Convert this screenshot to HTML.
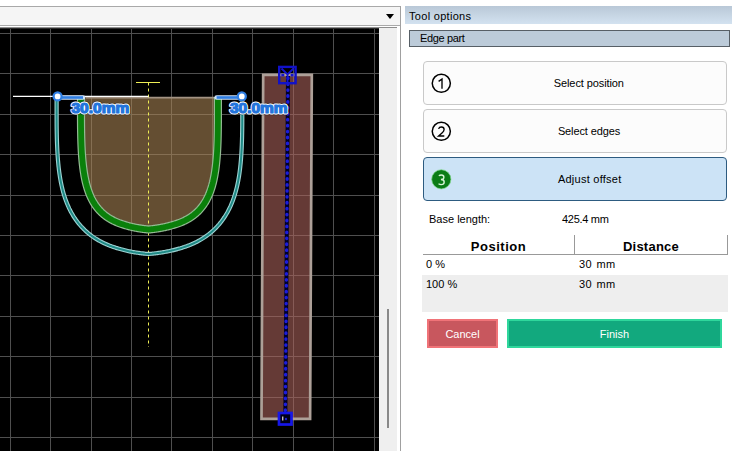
<!DOCTYPE html>
<html><head><meta charset="utf-8">
<style>
*{margin:0;padding:0;box-sizing:border-box}
html,body{width:732px;height:451px;overflow:hidden;background:#fff;font-family:"Liberation Sans",sans-serif;color:#000}
.abs{position:absolute}
#combo{left:-1px;top:6px;width:402px;height:20px;background:#f5f5f5;border:1px solid #a9a9a9}
#arrow{left:385.5px;top:14px;width:0;height:0;border-left:4.5px solid transparent;border-right:4.5px solid transparent;border-top:5px solid #000}
#vline{left:400px;top:6px;width:1px;height:445px;background:#a0a0a0}
#frametop{left:0;top:27px;width:397px;height:2px;background:linear-gradient(#8e8e8e 50%,#2c2c2c 50%)}
#sb{left:379px;top:28px;width:18px;height:423px;background:#efefef}
#thumb{left:387px;top:309px;width:2px;height:119px;background:#888}
#title{left:405px;top:6px;width:327px;height:18px;background:linear-gradient(#b9c8d7,#d3e2f0)}
.t{position:absolute;white-space:nowrap;font-size:11px;line-height:13px}
#edgebox{left:409px;top:30px;width:321px;height:17px;background:#bccbd9;border:1px solid #575f66}
.btn{position:absolute;left:423px;width:304px;height:44px;border:1px solid #c9c9c9;border-radius:4px;background:#fcfcfc}
.btn.sel{background:#cce3f6;border-color:#2d5b80}
.circ{position:absolute;left:8px;top:11px;width:20px;height:20px;border:1.6px solid #000;border-radius:50%;font-size:12px;line-height:17px;text-align:center}
.circ.g{background:#0d7a17;border-color:#0d7a17;color:#fff}
.bt{position:absolute;top:0;left:29px;right:0;height:42px;line-height:42px;text-align:center;font-size:11px}
#hdr1,#hdr2{position:absolute;top:235px;height:20px;padding-top:1px;border-bottom:1px solid #999;border-right:1px solid #999;font-weight:bold;font-size:13px;line-height:22px;text-align:center}
#hdr1{left:423px;width:152px}
#hdr2{left:575px;width:153px}
#row2{left:422px;top:275px;width:306px;height:37px;background:#eeeeee}
#cancel{left:427px;top:319px;width:71px;height:28.5px;background:#c8575e;border:2px solid #f07378;color:#fff;font-size:11px;line-height:26px;text-align:center}
#finish{left:507px;top:319px;width:215px;height:28.5px;background:#12a97e;border:2px solid #2fd79c;color:#fff;font-size:11px;line-height:26px;text-align:center}
svg{position:absolute;left:0;top:0}
</style></head><body>
<div id="combo" class="abs"></div>
<div id="arrow" class="abs"></div>
<div id="frametop" class="abs"></div>
<svg width="379" height="451" viewBox="0 0 379 451" style="clip-path:inset(29px 0 0 0)">
<defs><clipPath id="cv"><rect x="0" y="28" width="379" height="423"/></clipPath></defs>
<g clip-path="url(#cv)">
<rect x="0" y="28" width="379" height="423" fill="#000"/>
<g stroke="#4f4f4f" stroke-width="1" shape-rendering="crispEdges">
<line x1="10.5" y1="28" x2="10.5" y2="451"/>
<line x1="50.5" y1="28" x2="50.5" y2="451"/>
<line x1="91.5" y1="28" x2="91.5" y2="451"/>
<line x1="131.5" y1="28" x2="131.5" y2="451"/>
<line x1="171.5" y1="28" x2="171.5" y2="451"/>
<line x1="212.5" y1="28" x2="212.5" y2="451"/>
<line x1="252.5" y1="28" x2="252.5" y2="451"/>
<line x1="293.5" y1="28" x2="293.5" y2="451"/>
<line x1="333.5" y1="28" x2="333.5" y2="451"/>
<line x1="374.5" y1="28" x2="374.5" y2="451"/>
<line x1="0" y1="33.5" x2="379" y2="33.5"/>
<line x1="0" y1="73.5" x2="379" y2="73.5"/>
<line x1="0" y1="114.5" x2="379" y2="114.5"/>
<line x1="0" y1="154.5" x2="379" y2="154.5"/>
<line x1="0" y1="195.5" x2="379" y2="195.5"/>
<line x1="0" y1="235.5" x2="379" y2="235.5"/>
<line x1="0" y1="275.5" x2="379" y2="275.5"/>
<line x1="0" y1="316.5" x2="379" y2="316.5"/>
<line x1="0" y1="356.5" x2="379" y2="356.5"/>
<line x1="0" y1="397.5" x2="379" y2="397.5"/>
<line x1="0" y1="437.5" x2="379" y2="437.5"/>
</g>
<!-- U shape fill -->
<path d="M81.00,97.00 L81.00,115.10 L81.00,116.22 L81.00,117.33 L81.00,118.44 L81.01,119.54 L81.01,120.63 L81.02,121.72 L81.02,122.80 L81.03,123.88 L81.04,124.95 L81.05,126.01 L81.06,127.07 L81.07,128.12 L81.08,129.17 L81.10,130.21 L81.11,131.25 L81.13,132.28 L81.15,133.30 L81.17,134.32 L81.19,135.33 L81.21,136.34 L81.23,137.34 L81.26,138.33 L81.29,139.32 L81.32,140.30 L81.35,141.28 L81.38,142.25 L81.42,143.22 L81.45,144.18 L81.49,145.13 L81.53,146.08 L81.57,147.02 L81.62,147.96 L81.67,148.89 L81.71,149.81 L81.76,150.73 L81.82,151.65 L81.87,152.56 L81.93,153.46 L81.99,154.35 L82.05,155.25 L82.12,156.13 L82.18,157.01 L82.25,157.88 L82.32,158.75 L82.40,159.62 L82.47,160.47 L82.55,161.32 L82.64,162.17 L82.72,163.01 L82.81,163.84 L82.90,164.67 L82.99,165.50 L83.09,166.31 L83.19,167.13 L83.29,167.93 L83.39,168.73 L83.50,169.53 L83.61,170.32 L83.72,171.10 L83.84,171.88 L83.96,172.65 L84.08,173.42 L84.21,174.18 L84.34,174.94 L84.47,175.69 L84.61,176.44 L84.75,177.18 L84.89,177.91 L85.04,178.64 L85.19,179.36 L85.34,180.08 L85.50,180.79 L85.66,181.50 L85.83,182.20 L85.99,182.90 L86.17,183.59 L86.34,184.27 L86.52,184.95 L86.71,185.63 L86.89,186.29 L87.08,186.96 L87.28,187.62 L87.48,188.27 L87.68,188.91 L87.89,189.56 L88.10,190.19 L88.32,190.82 L88.54,191.45 L88.76,192.07 L88.99,192.68 L89.22,193.29 L89.46,193.90 L89.70,194.49 L89.95,195.09 L90.20,195.67 L90.46,196.26 L90.72,196.83 L90.98,197.41 L91.25,197.97 L91.53,198.53 L91.80,199.09 L92.09,199.64 L92.38,200.19 L92.67,200.73 L92.97,201.26 L93.27,201.79 L93.58,202.31 L93.89,202.83 L94.21,203.35 L94.53,203.85 L94.86,204.36 L95.19,204.85 L95.53,205.35 L95.88,205.83 L96.23,206.32 L96.58,206.79 L96.94,207.27 L97.31,207.73 L97.68,208.19 L98.05,208.65 L98.43,209.10 L98.82,209.55 L99.22,209.99 L99.61,210.42 L100.02,210.85 L100.43,211.28 L100.84,211.70 L101.27,212.11 L101.69,212.52 L102.13,212.93 L102.57,213.33 L103.01,213.72 L103.46,214.11 L103.92,214.49 L104.38,214.87 L104.85,215.25 L105.33,215.62 L105.81,215.98 L106.30,216.34 L106.79,216.69 L107.29,217.04 L107.80,217.39 L108.31,217.72 L108.83,218.06 L109.36,218.39 L109.89,218.71 L110.43,219.03 L110.98,219.34 L111.53,219.65 L112.09,219.95 L112.66,220.25 L113.23,220.55 L113.81,220.83 L114.40,221.12 L114.99,221.40 L115.59,221.67 L116.20,221.94 L116.81,222.20 L117.43,222.46 L118.06,222.71 L118.70,222.96 L119.34,223.21 L119.99,223.45 L120.64,223.68 L121.31,223.91 L121.98,224.13 L122.66,224.35 L123.35,224.57 L124.04,224.78 L124.74,224.99 L125.45,225.21 L126.17,225.43 L126.89,225.64 L127.62,225.84 L128.36,226.05 L129.11,226.24 L129.86,226.44 L130.62,226.62 L131.39,226.81 L132.17,226.99 L132.96,227.16 L133.75,227.33 L134.55,227.50 L135.36,227.66 L136.18,227.81 L137.01,227.97 L137.84,228.11 L138.68,228.26 L139.53,228.39 L140.39,228.53 L141.26,228.66 L142.14,228.78 L143.02,228.90 L143.91,229.02 L144.81,229.13 L145.72,229.24 L146.64,229.34 L147.57,229.44 L148.50,229.53 L149.46,229.44 L150.42,229.34 L151.36,229.23 L152.30,229.13 L153.23,229.01 L154.15,228.90 L155.06,228.78 L155.96,228.65 L156.85,228.52 L157.74,228.39 L158.61,228.25 L159.48,228.10 L160.34,227.96 L161.19,227.80 L162.03,227.65 L162.87,227.49 L163.70,227.32 L164.51,227.15 L165.32,226.97 L166.12,226.79 L166.92,226.61 L167.70,226.42 L168.48,226.23 L169.25,226.03 L170.01,225.83 L170.76,225.62 L171.51,225.41 L172.25,225.19 L172.97,224.98 L173.70,224.78 L174.41,224.57 L175.12,224.35 L175.82,224.13 L176.51,223.91 L177.19,223.68 L177.87,223.45 L178.54,223.21 L179.20,222.96 L179.85,222.71 L180.50,222.46 L181.14,222.20 L181.77,221.94 L182.40,221.67 L183.01,221.40 L183.62,221.12 L184.23,220.83 L184.82,220.55 L185.41,220.25 L186.00,219.95 L186.57,219.65 L187.14,219.34 L187.70,219.03 L188.26,218.71 L188.80,218.39 L189.35,218.06 L189.88,217.72 L190.41,217.39 L190.93,217.04 L191.45,216.69 L191.95,216.34 L192.46,215.98 L192.95,215.62 L193.44,215.25 L193.92,214.87 L194.40,214.49 L194.87,214.11 L195.33,213.72 L195.79,213.33 L196.24,212.93 L196.69,212.52 L197.13,212.11 L197.56,211.70 L197.99,211.28 L198.41,210.85 L198.83,210.42 L199.24,209.99 L199.64,209.55 L200.04,209.10 L200.43,208.65 L200.82,208.19 L201.20,207.73 L201.57,207.27 L201.94,206.79 L202.31,206.32 L202.67,205.83 L203.02,205.35 L203.37,204.85 L203.71,204.36 L204.05,203.85 L204.38,203.35 L204.71,202.83 L205.03,202.31 L205.34,201.79 L205.65,201.26 L205.96,200.73 L206.26,200.19 L206.56,199.64 L206.85,199.09 L207.13,198.53 L207.41,197.97 L207.69,197.41 L207.96,196.83 L208.23,196.26 L208.49,195.67 L208.75,195.09 L209.00,194.49 L209.25,193.90 L209.49,193.29 L209.73,192.68 L209.97,192.07 L210.20,191.45 L210.42,190.82 L210.64,190.19 L210.86,189.56 L211.07,188.91 L211.28,188.27 L211.49,187.62 L211.69,186.96 L211.88,186.29 L212.08,185.63 L212.26,184.95 L212.45,184.27 L212.63,183.59 L212.80,182.90 L212.98,182.20 L213.14,181.50 L213.31,180.79 L213.47,180.08 L213.63,179.36 L213.78,178.64 L213.93,177.91 L214.08,177.18 L214.22,176.44 L214.36,175.69 L214.50,174.94 L214.63,174.18 L214.76,173.42 L214.88,172.65 L215.01,171.88 L215.13,171.10 L215.24,170.32 L215.36,169.53 L215.47,168.73 L215.57,167.93 L215.68,167.13 L215.78,166.31 L215.87,165.50 L215.97,164.67 L216.06,163.84 L216.15,163.01 L216.24,162.17 L216.32,161.32 L216.40,160.47 L216.48,159.62 L216.56,158.75 L216.63,157.88 L216.70,157.01 L216.77,156.13 L216.83,155.25 L216.90,154.35 L216.96,153.46 L217.01,152.56 L217.07,151.65 L217.12,150.73 L217.18,149.81 L217.23,148.89 L217.27,147.96 L217.32,147.02 L217.36,146.08 L217.40,145.13 L217.44,144.18 L217.48,143.22 L217.51,142.25 L217.55,141.28 L217.58,140.30 L217.61,139.32 L217.64,138.33 L217.66,137.34 L217.69,136.34 L217.71,135.33 L217.73,134.32 L217.75,133.30 L217.77,132.28 L217.79,131.25 L217.80,130.21 L217.82,129.17 L217.83,128.12 L217.84,127.07 L217.85,126.01 L217.86,124.95 L217.87,123.88 L217.88,122.80 L217.88,121.72 L217.89,120.63 L217.89,119.54 L217.90,118.44 L217.90,117.33 L217.90,116.22 L217.90,115.10 L217.90,97.00 Z" fill="#ac8656" fill-opacity="0.58"/>
<!-- rectangle -->
<polygon points="263.2,74.8 311.8,74.8 310.1,418.8 261.5,418.8" fill="#ae645d" fill-opacity="0.58" stroke="#ada098" stroke-width="2.7"/>

<line x1="86" y1="97.6" x2="214" y2="97.6" stroke="#a39383" stroke-width="1.6"/>
<line x1="136" y1="82.5" x2="160" y2="82.5" stroke="#eeee55" stroke-width="1"/>
<line x1="148.5" y1="82.5" x2="148.5" y2="347" stroke="#eeee55" stroke-width="1" stroke-dasharray="3,3"/>
<path d="M81.00,97.00 L81.00,115.10 L81.00,116.22 L81.00,117.33 L81.00,118.44 L81.01,119.54 L81.01,120.63 L81.02,121.72 L81.02,122.80 L81.03,123.88 L81.04,124.95 L81.05,126.01 L81.06,127.07 L81.07,128.12 L81.08,129.17 L81.10,130.21 L81.11,131.25 L81.13,132.28 L81.15,133.30 L81.17,134.32 L81.19,135.33 L81.21,136.34 L81.23,137.34 L81.26,138.33 L81.29,139.32 L81.32,140.30 L81.35,141.28 L81.38,142.25 L81.42,143.22 L81.45,144.18 L81.49,145.13 L81.53,146.08 L81.57,147.02 L81.62,147.96 L81.67,148.89 L81.71,149.81 L81.76,150.73 L81.82,151.65 L81.87,152.56 L81.93,153.46 L81.99,154.35 L82.05,155.25 L82.12,156.13 L82.18,157.01 L82.25,157.88 L82.32,158.75 L82.40,159.62 L82.47,160.47 L82.55,161.32 L82.64,162.17 L82.72,163.01 L82.81,163.84 L82.90,164.67 L82.99,165.50 L83.09,166.31 L83.19,167.13 L83.29,167.93 L83.39,168.73 L83.50,169.53 L83.61,170.32 L83.72,171.10 L83.84,171.88 L83.96,172.65 L84.08,173.42 L84.21,174.18 L84.34,174.94 L84.47,175.69 L84.61,176.44 L84.75,177.18 L84.89,177.91 L85.04,178.64 L85.19,179.36 L85.34,180.08 L85.50,180.79 L85.66,181.50 L85.83,182.20 L85.99,182.90 L86.17,183.59 L86.34,184.27 L86.52,184.95 L86.71,185.63 L86.89,186.29 L87.08,186.96 L87.28,187.62 L87.48,188.27 L87.68,188.91 L87.89,189.56 L88.10,190.19 L88.32,190.82 L88.54,191.45 L88.76,192.07 L88.99,192.68 L89.22,193.29 L89.46,193.90 L89.70,194.49 L89.95,195.09 L90.20,195.67 L90.46,196.26 L90.72,196.83 L90.98,197.41 L91.25,197.97 L91.53,198.53 L91.80,199.09 L92.09,199.64 L92.38,200.19 L92.67,200.73 L92.97,201.26 L93.27,201.79 L93.58,202.31 L93.89,202.83 L94.21,203.35 L94.53,203.85 L94.86,204.36 L95.19,204.85 L95.53,205.35 L95.88,205.83 L96.23,206.32 L96.58,206.79 L96.94,207.27 L97.31,207.73 L97.68,208.19 L98.05,208.65 L98.43,209.10 L98.82,209.55 L99.22,209.99 L99.61,210.42 L100.02,210.85 L100.43,211.28 L100.84,211.70 L101.27,212.11 L101.69,212.52 L102.13,212.93 L102.57,213.33 L103.01,213.72 L103.46,214.11 L103.92,214.49 L104.38,214.87 L104.85,215.25 L105.33,215.62 L105.81,215.98 L106.30,216.34 L106.79,216.69 L107.29,217.04 L107.80,217.39 L108.31,217.72 L108.83,218.06 L109.36,218.39 L109.89,218.71 L110.43,219.03 L110.98,219.34 L111.53,219.65 L112.09,219.95 L112.66,220.25 L113.23,220.55 L113.81,220.83 L114.40,221.12 L114.99,221.40 L115.59,221.67 L116.20,221.94 L116.81,222.20 L117.43,222.46 L118.06,222.71 L118.70,222.96 L119.34,223.21 L119.99,223.45 L120.64,223.68 L121.31,223.91 L121.98,224.13 L122.66,224.35 L123.35,224.57 L124.04,224.78 L124.74,224.99 L125.45,225.21 L126.17,225.43 L126.89,225.64 L127.62,225.84 L128.36,226.05 L129.11,226.24 L129.86,226.44 L130.62,226.62 L131.39,226.81 L132.17,226.99 L132.96,227.16 L133.75,227.33 L134.55,227.50 L135.36,227.66 L136.18,227.81 L137.01,227.97 L137.84,228.11 L138.68,228.26 L139.53,228.39 L140.39,228.53 L141.26,228.66 L142.14,228.78 L143.02,228.90 L143.91,229.02 L144.81,229.13 L145.72,229.24 L146.64,229.34 L147.57,229.44 L148.50,229.53 L149.46,229.44 L150.42,229.34 L151.36,229.23 L152.30,229.13 L153.23,229.01 L154.15,228.90 L155.06,228.78 L155.96,228.65 L156.85,228.52 L157.74,228.39 L158.61,228.25 L159.48,228.10 L160.34,227.96 L161.19,227.80 L162.03,227.65 L162.87,227.49 L163.70,227.32 L164.51,227.15 L165.32,226.97 L166.12,226.79 L166.92,226.61 L167.70,226.42 L168.48,226.23 L169.25,226.03 L170.01,225.83 L170.76,225.62 L171.51,225.41 L172.25,225.19 L172.97,224.98 L173.70,224.78 L174.41,224.57 L175.12,224.35 L175.82,224.13 L176.51,223.91 L177.19,223.68 L177.87,223.45 L178.54,223.21 L179.20,222.96 L179.85,222.71 L180.50,222.46 L181.14,222.20 L181.77,221.94 L182.40,221.67 L183.01,221.40 L183.62,221.12 L184.23,220.83 L184.82,220.55 L185.41,220.25 L186.00,219.95 L186.57,219.65 L187.14,219.34 L187.70,219.03 L188.26,218.71 L188.80,218.39 L189.35,218.06 L189.88,217.72 L190.41,217.39 L190.93,217.04 L191.45,216.69 L191.95,216.34 L192.46,215.98 L192.95,215.62 L193.44,215.25 L193.92,214.87 L194.40,214.49 L194.87,214.11 L195.33,213.72 L195.79,213.33 L196.24,212.93 L196.69,212.52 L197.13,212.11 L197.56,211.70 L197.99,211.28 L198.41,210.85 L198.83,210.42 L199.24,209.99 L199.64,209.55 L200.04,209.10 L200.43,208.65 L200.82,208.19 L201.20,207.73 L201.57,207.27 L201.94,206.79 L202.31,206.32 L202.67,205.83 L203.02,205.35 L203.37,204.85 L203.71,204.36 L204.05,203.85 L204.38,203.35 L204.71,202.83 L205.03,202.31 L205.34,201.79 L205.65,201.26 L205.96,200.73 L206.26,200.19 L206.56,199.64 L206.85,199.09 L207.13,198.53 L207.41,197.97 L207.69,197.41 L207.96,196.83 L208.23,196.26 L208.49,195.67 L208.75,195.09 L209.00,194.49 L209.25,193.90 L209.49,193.29 L209.73,192.68 L209.97,192.07 L210.20,191.45 L210.42,190.82 L210.64,190.19 L210.86,189.56 L211.07,188.91 L211.28,188.27 L211.49,187.62 L211.69,186.96 L211.88,186.29 L212.08,185.63 L212.26,184.95 L212.45,184.27 L212.63,183.59 L212.80,182.90 L212.98,182.20 L213.14,181.50 L213.31,180.79 L213.47,180.08 L213.63,179.36 L213.78,178.64 L213.93,177.91 L214.08,177.18 L214.22,176.44 L214.36,175.69 L214.50,174.94 L214.63,174.18 L214.76,173.42 L214.88,172.65 L215.01,171.88 L215.13,171.10 L215.24,170.32 L215.36,169.53 L215.47,168.73 L215.57,167.93 L215.68,167.13 L215.78,166.31 L215.87,165.50 L215.97,164.67 L216.06,163.84 L216.15,163.01 L216.24,162.17 L216.32,161.32 L216.40,160.47 L216.48,159.62 L216.56,158.75 L216.63,157.88 L216.70,157.01 L216.77,156.13 L216.83,155.25 L216.90,154.35 L216.96,153.46 L217.01,152.56 L217.07,151.65 L217.12,150.73 L217.18,149.81 L217.23,148.89 L217.27,147.96 L217.32,147.02 L217.36,146.08 L217.40,145.13 L217.44,144.18 L217.48,143.22 L217.51,142.25 L217.55,141.28 L217.58,140.30 L217.61,139.32 L217.64,138.33 L217.66,137.34 L217.69,136.34 L217.71,135.33 L217.73,134.32 L217.75,133.30 L217.77,132.28 L217.79,131.25 L217.80,130.21 L217.82,129.17 L217.83,128.12 L217.84,127.07 L217.85,126.01 L217.86,124.95 L217.87,123.88 L217.88,122.80 L217.88,121.72 L217.89,120.63 L217.89,119.54 L217.90,118.44 L217.90,117.33 L217.90,116.22 L217.90,115.10 L217.90,97.00" fill="none" stroke="#93ba93" stroke-width="8.2" stroke-linejoin="round"/>
<path d="M81.00,97.00 L81.00,115.10 L81.00,116.22 L81.00,117.33 L81.00,118.44 L81.01,119.54 L81.01,120.63 L81.02,121.72 L81.02,122.80 L81.03,123.88 L81.04,124.95 L81.05,126.01 L81.06,127.07 L81.07,128.12 L81.08,129.17 L81.10,130.21 L81.11,131.25 L81.13,132.28 L81.15,133.30 L81.17,134.32 L81.19,135.33 L81.21,136.34 L81.23,137.34 L81.26,138.33 L81.29,139.32 L81.32,140.30 L81.35,141.28 L81.38,142.25 L81.42,143.22 L81.45,144.18 L81.49,145.13 L81.53,146.08 L81.57,147.02 L81.62,147.96 L81.67,148.89 L81.71,149.81 L81.76,150.73 L81.82,151.65 L81.87,152.56 L81.93,153.46 L81.99,154.35 L82.05,155.25 L82.12,156.13 L82.18,157.01 L82.25,157.88 L82.32,158.75 L82.40,159.62 L82.47,160.47 L82.55,161.32 L82.64,162.17 L82.72,163.01 L82.81,163.84 L82.90,164.67 L82.99,165.50 L83.09,166.31 L83.19,167.13 L83.29,167.93 L83.39,168.73 L83.50,169.53 L83.61,170.32 L83.72,171.10 L83.84,171.88 L83.96,172.65 L84.08,173.42 L84.21,174.18 L84.34,174.94 L84.47,175.69 L84.61,176.44 L84.75,177.18 L84.89,177.91 L85.04,178.64 L85.19,179.36 L85.34,180.08 L85.50,180.79 L85.66,181.50 L85.83,182.20 L85.99,182.90 L86.17,183.59 L86.34,184.27 L86.52,184.95 L86.71,185.63 L86.89,186.29 L87.08,186.96 L87.28,187.62 L87.48,188.27 L87.68,188.91 L87.89,189.56 L88.10,190.19 L88.32,190.82 L88.54,191.45 L88.76,192.07 L88.99,192.68 L89.22,193.29 L89.46,193.90 L89.70,194.49 L89.95,195.09 L90.20,195.67 L90.46,196.26 L90.72,196.83 L90.98,197.41 L91.25,197.97 L91.53,198.53 L91.80,199.09 L92.09,199.64 L92.38,200.19 L92.67,200.73 L92.97,201.26 L93.27,201.79 L93.58,202.31 L93.89,202.83 L94.21,203.35 L94.53,203.85 L94.86,204.36 L95.19,204.85 L95.53,205.35 L95.88,205.83 L96.23,206.32 L96.58,206.79 L96.94,207.27 L97.31,207.73 L97.68,208.19 L98.05,208.65 L98.43,209.10 L98.82,209.55 L99.22,209.99 L99.61,210.42 L100.02,210.85 L100.43,211.28 L100.84,211.70 L101.27,212.11 L101.69,212.52 L102.13,212.93 L102.57,213.33 L103.01,213.72 L103.46,214.11 L103.92,214.49 L104.38,214.87 L104.85,215.25 L105.33,215.62 L105.81,215.98 L106.30,216.34 L106.79,216.69 L107.29,217.04 L107.80,217.39 L108.31,217.72 L108.83,218.06 L109.36,218.39 L109.89,218.71 L110.43,219.03 L110.98,219.34 L111.53,219.65 L112.09,219.95 L112.66,220.25 L113.23,220.55 L113.81,220.83 L114.40,221.12 L114.99,221.40 L115.59,221.67 L116.20,221.94 L116.81,222.20 L117.43,222.46 L118.06,222.71 L118.70,222.96 L119.34,223.21 L119.99,223.45 L120.64,223.68 L121.31,223.91 L121.98,224.13 L122.66,224.35 L123.35,224.57 L124.04,224.78 L124.74,224.99 L125.45,225.21 L126.17,225.43 L126.89,225.64 L127.62,225.84 L128.36,226.05 L129.11,226.24 L129.86,226.44 L130.62,226.62 L131.39,226.81 L132.17,226.99 L132.96,227.16 L133.75,227.33 L134.55,227.50 L135.36,227.66 L136.18,227.81 L137.01,227.97 L137.84,228.11 L138.68,228.26 L139.53,228.39 L140.39,228.53 L141.26,228.66 L142.14,228.78 L143.02,228.90 L143.91,229.02 L144.81,229.13 L145.72,229.24 L146.64,229.34 L147.57,229.44 L148.50,229.53 L149.46,229.44 L150.42,229.34 L151.36,229.23 L152.30,229.13 L153.23,229.01 L154.15,228.90 L155.06,228.78 L155.96,228.65 L156.85,228.52 L157.74,228.39 L158.61,228.25 L159.48,228.10 L160.34,227.96 L161.19,227.80 L162.03,227.65 L162.87,227.49 L163.70,227.32 L164.51,227.15 L165.32,226.97 L166.12,226.79 L166.92,226.61 L167.70,226.42 L168.48,226.23 L169.25,226.03 L170.01,225.83 L170.76,225.62 L171.51,225.41 L172.25,225.19 L172.97,224.98 L173.70,224.78 L174.41,224.57 L175.12,224.35 L175.82,224.13 L176.51,223.91 L177.19,223.68 L177.87,223.45 L178.54,223.21 L179.20,222.96 L179.85,222.71 L180.50,222.46 L181.14,222.20 L181.77,221.94 L182.40,221.67 L183.01,221.40 L183.62,221.12 L184.23,220.83 L184.82,220.55 L185.41,220.25 L186.00,219.95 L186.57,219.65 L187.14,219.34 L187.70,219.03 L188.26,218.71 L188.80,218.39 L189.35,218.06 L189.88,217.72 L190.41,217.39 L190.93,217.04 L191.45,216.69 L191.95,216.34 L192.46,215.98 L192.95,215.62 L193.44,215.25 L193.92,214.87 L194.40,214.49 L194.87,214.11 L195.33,213.72 L195.79,213.33 L196.24,212.93 L196.69,212.52 L197.13,212.11 L197.56,211.70 L197.99,211.28 L198.41,210.85 L198.83,210.42 L199.24,209.99 L199.64,209.55 L200.04,209.10 L200.43,208.65 L200.82,208.19 L201.20,207.73 L201.57,207.27 L201.94,206.79 L202.31,206.32 L202.67,205.83 L203.02,205.35 L203.37,204.85 L203.71,204.36 L204.05,203.85 L204.38,203.35 L204.71,202.83 L205.03,202.31 L205.34,201.79 L205.65,201.26 L205.96,200.73 L206.26,200.19 L206.56,199.64 L206.85,199.09 L207.13,198.53 L207.41,197.97 L207.69,197.41 L207.96,196.83 L208.23,196.26 L208.49,195.67 L208.75,195.09 L209.00,194.49 L209.25,193.90 L209.49,193.29 L209.73,192.68 L209.97,192.07 L210.20,191.45 L210.42,190.82 L210.64,190.19 L210.86,189.56 L211.07,188.91 L211.28,188.27 L211.49,187.62 L211.69,186.96 L211.88,186.29 L212.08,185.63 L212.26,184.95 L212.45,184.27 L212.63,183.59 L212.80,182.90 L212.98,182.20 L213.14,181.50 L213.31,180.79 L213.47,180.08 L213.63,179.36 L213.78,178.64 L213.93,177.91 L214.08,177.18 L214.22,176.44 L214.36,175.69 L214.50,174.94 L214.63,174.18 L214.76,173.42 L214.88,172.65 L215.01,171.88 L215.13,171.10 L215.24,170.32 L215.36,169.53 L215.47,168.73 L215.57,167.93 L215.68,167.13 L215.78,166.31 L215.87,165.50 L215.97,164.67 L216.06,163.84 L216.15,163.01 L216.24,162.17 L216.32,161.32 L216.40,160.47 L216.48,159.62 L216.56,158.75 L216.63,157.88 L216.70,157.01 L216.77,156.13 L216.83,155.25 L216.90,154.35 L216.96,153.46 L217.01,152.56 L217.07,151.65 L217.12,150.73 L217.18,149.81 L217.23,148.89 L217.27,147.96 L217.32,147.02 L217.36,146.08 L217.40,145.13 L217.44,144.18 L217.48,143.22 L217.51,142.25 L217.55,141.28 L217.58,140.30 L217.61,139.32 L217.64,138.33 L217.66,137.34 L217.69,136.34 L217.71,135.33 L217.73,134.32 L217.75,133.30 L217.77,132.28 L217.79,131.25 L217.80,130.21 L217.82,129.17 L217.83,128.12 L217.84,127.07 L217.85,126.01 L217.86,124.95 L217.87,123.88 L217.88,122.80 L217.88,121.72 L217.89,120.63 L217.89,119.54 L217.90,118.44 L217.90,117.33 L217.90,116.22 L217.90,115.10 L217.90,97.00" fill="none" stroke="#0a800a" stroke-width="5.8" stroke-linejoin="round"/>
<path d="M56.61,97.00 L56.62,115.10 L56.62,116.24 L56.62,117.37 L56.62,118.49 L56.62,119.61 L56.63,120.73 L56.63,121.84 L56.64,122.95 L56.64,124.05 L56.65,125.15 L56.66,126.24 L56.67,127.33 L56.68,128.41 L56.70,129.49 L56.71,130.56 L56.73,131.63 L56.75,132.70 L56.77,133.76 L56.79,134.81 L56.81,135.86 L56.83,136.91 L56.86,137.95 L56.88,138.99 L56.91,140.03 L56.94,141.05 L56.98,142.08 L57.01,143.10 L57.05,144.12 L57.09,145.13 L57.13,146.14 L57.17,147.15 L57.22,148.15 L57.26,149.14 L57.31,150.13 L57.36,151.12 L57.42,152.11 L57.48,153.09 L57.53,154.07 L57.60,155.04 L57.66,156.01 L57.73,156.97 L57.80,157.94 L57.87,158.89 L57.95,159.85 L58.02,160.80 L58.11,161.75 L58.19,162.69 L58.28,163.63 L58.37,164.57 L58.46,165.50 L58.56,166.43 L58.66,167.36 L58.77,168.28 L58.87,169.20 L58.99,170.12 L59.10,171.04 L59.22,171.95 L59.34,172.86 L59.47,173.76 L59.60,174.66 L59.73,175.56 L59.87,176.46 L60.02,177.35 L60.16,178.24 L60.32,179.13 L60.47,180.01 L60.64,180.89 L60.80,181.77 L60.97,182.65 L61.15,183.52 L61.33,184.40 L61.52,185.26 L61.71,186.13 L61.90,186.99 L62.11,187.85 L62.31,188.71 L62.53,189.57 L62.75,190.42 L62.97,191.27 L63.20,192.12 L63.44,192.97 L63.68,193.81 L63.93,194.65 L64.19,195.49 L64.45,196.33 L64.72,197.16 L65.00,197.99 L65.28,198.82 L65.57,199.65 L65.87,200.47 L66.18,201.29 L66.49,202.11 L66.81,202.93 L67.14,203.74 L67.48,204.55 L67.82,205.36 L68.17,206.16 L68.54,206.96 L68.91,207.76 L69.28,208.56 L69.67,209.35 L70.07,210.14 L70.47,210.92 L70.88,211.70 L71.30,212.48 L71.74,213.25 L72.18,214.02 L72.63,214.79 L73.09,215.55 L73.55,216.31 L74.03,217.06 L74.52,217.81 L75.02,218.55 L75.52,219.29 L76.04,220.02 L76.57,220.74 L77.10,221.46 L77.65,222.18 L78.20,222.89 L78.77,223.59 L79.34,224.29 L79.93,224.98 L80.52,225.66 L81.12,226.34 L81.73,227.00 L82.36,227.67 L82.99,228.32 L83.63,228.97 L84.28,229.61 L84.93,230.24 L85.60,230.86 L86.28,231.47 L86.96,232.08 L87.65,232.68 L88.36,233.27 L89.07,233.85 L89.78,234.42 L90.51,234.98 L91.24,235.54 L91.98,236.08 L92.73,236.62 L93.49,237.14 L94.25,237.66 L95.02,238.17 L95.79,238.66 L96.58,239.15 L97.37,239.63 L98.16,240.10 L98.97,240.56 L99.78,241.01 L100.59,241.46 L101.41,241.89 L102.24,242.31 L103.07,242.73 L103.91,243.13 L104.75,243.53 L105.60,243.91 L106.45,244.29 L107.31,244.66 L108.18,245.02 L109.05,245.37 L109.92,245.72 L110.80,246.05 L111.69,246.37 L112.57,246.69 L113.47,247.00 L114.37,247.30 L115.27,247.59 L116.18,247.88 L116.99,248.12 L117.59,248.30 L118.31,248.53 L119.23,248.80 L120.16,249.07 L121.09,249.34 L122.03,249.59 L122.97,249.84 L123.92,250.09 L124.87,250.32 L125.83,250.55 L126.79,250.77 L127.76,250.99 L128.74,251.20 L129.72,251.40 L130.70,251.59 L131.69,251.78 L132.68,251.97 L133.69,252.14 L134.69,252.31 L135.70,252.48 L136.72,252.64 L137.74,252.79 L138.77,252.93 L139.81,253.07 L140.85,253.21 L141.89,253.34 L142.95,253.46 L144.01,253.58 L145.07,253.69 L148.51,253.91 L151.91,253.70 L152.99,253.59 L154.08,253.47 L155.15,253.34 L156.22,253.21 L157.29,253.08 L158.34,252.94 L159.40,252.79 L160.44,252.64 L161.48,252.48 L162.51,252.32 L163.54,252.15 L164.56,251.97 L165.58,251.79 L166.59,251.60 L167.59,251.41 L168.59,251.21 L169.58,251.00 L170.57,250.79 L171.55,250.57 L172.53,250.34 L173.50,250.11 L174.47,249.87 L175.43,249.62 L176.38,249.36 L177.33,249.10 L178.28,248.83 L179.01,248.62 L179.63,248.44 L180.46,248.21 L181.39,247.93 L182.31,247.65 L183.23,247.36 L184.15,247.07 L185.06,246.76 L185.96,246.45 L186.86,246.13 L187.75,245.80 L188.64,245.46 L189.53,245.11 L190.41,244.76 L191.28,244.39 L192.15,244.02 L193.01,243.64 L193.87,243.25 L194.72,242.85 L195.57,242.44 L196.41,242.02 L197.24,241.59 L198.07,241.15 L198.89,240.71 L199.71,240.25 L200.52,239.79 L201.33,239.31 L202.12,238.83 L202.91,238.33 L203.70,237.83 L204.47,237.32 L205.24,236.80 L206.01,236.27 L206.76,235.73 L207.51,235.18 L208.25,234.62 L208.98,234.05 L209.71,233.48 L210.42,232.89 L211.13,232.30 L211.83,231.70 L212.52,231.09 L213.20,230.47 L213.88,229.84 L214.54,229.20 L215.20,228.56 L215.84,227.91 L216.48,227.25 L217.11,226.58 L217.72,225.91 L218.33,225.22 L218.93,224.54 L219.52,223.84 L220.10,223.14 L220.67,222.43 L221.23,221.72 L221.78,220.99 L222.32,220.27 L222.85,219.54 L223.37,218.80 L223.88,218.05 L224.39,217.31 L224.88,216.55 L225.36,215.80 L225.83,215.03 L226.29,214.26 L226.75,213.49 L227.19,212.72 L227.63,211.94 L228.05,211.15 L228.47,210.37 L228.88,209.57 L229.27,208.78 L229.66,207.98 L230.04,207.18 L230.42,206.38 L230.78,205.57 L231.13,204.76 L231.48,203.94 L231.82,203.13 L232.15,202.31 L232.47,201.48 L232.79,200.66 L233.10,199.83 L233.40,199.00 L233.69,198.17 L233.97,197.33 L234.25,196.50 L234.52,195.65 L234.79,194.81 L235.04,193.97 L235.29,193.12 L235.54,192.27 L235.78,191.42 L236.01,190.56 L236.23,189.70 L236.45,188.84 L236.67,187.98 L236.87,187.12 L237.08,186.25 L237.27,185.38 L237.46,184.51 L237.65,183.63 L237.83,182.76 L238.01,181.88 L238.18,180.99 L238.34,180.11 L238.50,179.22 L238.66,178.33 L238.81,177.44 L238.96,176.54 L239.10,175.64 L239.24,174.74 L239.37,173.83 L239.50,172.93 L239.63,172.01 L239.75,171.10 L239.87,170.18 L239.98,169.26 L240.09,168.34 L240.20,167.42 L240.30,166.49 L240.40,165.55 L240.50,164.62 L240.59,163.68 L240.68,162.73 L240.77,161.79 L240.85,160.84 L240.93,159.89 L241.01,158.93 L241.08,157.97 L241.15,157.01 L241.22,156.04 L241.29,155.07 L241.35,154.09 L241.41,153.11 L241.47,152.13 L241.52,151.15 L241.58,150.16 L241.63,149.16 L241.68,148.16 L241.72,147.16 L241.77,146.16 L241.81,145.15 L241.85,144.13 L241.88,143.11 L241.92,142.09 L241.95,141.07 L241.98,140.03 L242.01,139.00 L242.04,137.96 L242.07,136.92 L242.09,135.87 L242.11,134.82 L242.13,133.76 L242.15,132.70 L242.17,131.63 L242.19,130.56 L242.20,129.49 L242.21,128.41 L242.23,127.33 L242.24,126.24 L242.25,125.15 L242.26,124.05 L242.26,122.95 L242.27,121.84 L242.27,120.73 L242.28,119.61 L242.28,118.49 L242.28,117.37 L242.28,116.24 L242.28,115.10 L242.28,97.00" fill="none" stroke="#9cd2d2" stroke-width="4.2" stroke-linejoin="round"/>
<path d="M56.61,97.00 L56.62,115.10 L56.62,116.24 L56.62,117.37 L56.62,118.49 L56.62,119.61 L56.63,120.73 L56.63,121.84 L56.64,122.95 L56.64,124.05 L56.65,125.15 L56.66,126.24 L56.67,127.33 L56.68,128.41 L56.70,129.49 L56.71,130.56 L56.73,131.63 L56.75,132.70 L56.77,133.76 L56.79,134.81 L56.81,135.86 L56.83,136.91 L56.86,137.95 L56.88,138.99 L56.91,140.03 L56.94,141.05 L56.98,142.08 L57.01,143.10 L57.05,144.12 L57.09,145.13 L57.13,146.14 L57.17,147.15 L57.22,148.15 L57.26,149.14 L57.31,150.13 L57.36,151.12 L57.42,152.11 L57.48,153.09 L57.53,154.07 L57.60,155.04 L57.66,156.01 L57.73,156.97 L57.80,157.94 L57.87,158.89 L57.95,159.85 L58.02,160.80 L58.11,161.75 L58.19,162.69 L58.28,163.63 L58.37,164.57 L58.46,165.50 L58.56,166.43 L58.66,167.36 L58.77,168.28 L58.87,169.20 L58.99,170.12 L59.10,171.04 L59.22,171.95 L59.34,172.86 L59.47,173.76 L59.60,174.66 L59.73,175.56 L59.87,176.46 L60.02,177.35 L60.16,178.24 L60.32,179.13 L60.47,180.01 L60.64,180.89 L60.80,181.77 L60.97,182.65 L61.15,183.52 L61.33,184.40 L61.52,185.26 L61.71,186.13 L61.90,186.99 L62.11,187.85 L62.31,188.71 L62.53,189.57 L62.75,190.42 L62.97,191.27 L63.20,192.12 L63.44,192.97 L63.68,193.81 L63.93,194.65 L64.19,195.49 L64.45,196.33 L64.72,197.16 L65.00,197.99 L65.28,198.82 L65.57,199.65 L65.87,200.47 L66.18,201.29 L66.49,202.11 L66.81,202.93 L67.14,203.74 L67.48,204.55 L67.82,205.36 L68.17,206.16 L68.54,206.96 L68.91,207.76 L69.28,208.56 L69.67,209.35 L70.07,210.14 L70.47,210.92 L70.88,211.70 L71.30,212.48 L71.74,213.25 L72.18,214.02 L72.63,214.79 L73.09,215.55 L73.55,216.31 L74.03,217.06 L74.52,217.81 L75.02,218.55 L75.52,219.29 L76.04,220.02 L76.57,220.74 L77.10,221.46 L77.65,222.18 L78.20,222.89 L78.77,223.59 L79.34,224.29 L79.93,224.98 L80.52,225.66 L81.12,226.34 L81.73,227.00 L82.36,227.67 L82.99,228.32 L83.63,228.97 L84.28,229.61 L84.93,230.24 L85.60,230.86 L86.28,231.47 L86.96,232.08 L87.65,232.68 L88.36,233.27 L89.07,233.85 L89.78,234.42 L90.51,234.98 L91.24,235.54 L91.98,236.08 L92.73,236.62 L93.49,237.14 L94.25,237.66 L95.02,238.17 L95.79,238.66 L96.58,239.15 L97.37,239.63 L98.16,240.10 L98.97,240.56 L99.78,241.01 L100.59,241.46 L101.41,241.89 L102.24,242.31 L103.07,242.73 L103.91,243.13 L104.75,243.53 L105.60,243.91 L106.45,244.29 L107.31,244.66 L108.18,245.02 L109.05,245.37 L109.92,245.72 L110.80,246.05 L111.69,246.37 L112.57,246.69 L113.47,247.00 L114.37,247.30 L115.27,247.59 L116.18,247.88 L116.99,248.12 L117.59,248.30 L118.31,248.53 L119.23,248.80 L120.16,249.07 L121.09,249.34 L122.03,249.59 L122.97,249.84 L123.92,250.09 L124.87,250.32 L125.83,250.55 L126.79,250.77 L127.76,250.99 L128.74,251.20 L129.72,251.40 L130.70,251.59 L131.69,251.78 L132.68,251.97 L133.69,252.14 L134.69,252.31 L135.70,252.48 L136.72,252.64 L137.74,252.79 L138.77,252.93 L139.81,253.07 L140.85,253.21 L141.89,253.34 L142.95,253.46 L144.01,253.58 L145.07,253.69 L148.51,253.91 L151.91,253.70 L152.99,253.59 L154.08,253.47 L155.15,253.34 L156.22,253.21 L157.29,253.08 L158.34,252.94 L159.40,252.79 L160.44,252.64 L161.48,252.48 L162.51,252.32 L163.54,252.15 L164.56,251.97 L165.58,251.79 L166.59,251.60 L167.59,251.41 L168.59,251.21 L169.58,251.00 L170.57,250.79 L171.55,250.57 L172.53,250.34 L173.50,250.11 L174.47,249.87 L175.43,249.62 L176.38,249.36 L177.33,249.10 L178.28,248.83 L179.01,248.62 L179.63,248.44 L180.46,248.21 L181.39,247.93 L182.31,247.65 L183.23,247.36 L184.15,247.07 L185.06,246.76 L185.96,246.45 L186.86,246.13 L187.75,245.80 L188.64,245.46 L189.53,245.11 L190.41,244.76 L191.28,244.39 L192.15,244.02 L193.01,243.64 L193.87,243.25 L194.72,242.85 L195.57,242.44 L196.41,242.02 L197.24,241.59 L198.07,241.15 L198.89,240.71 L199.71,240.25 L200.52,239.79 L201.33,239.31 L202.12,238.83 L202.91,238.33 L203.70,237.83 L204.47,237.32 L205.24,236.80 L206.01,236.27 L206.76,235.73 L207.51,235.18 L208.25,234.62 L208.98,234.05 L209.71,233.48 L210.42,232.89 L211.13,232.30 L211.83,231.70 L212.52,231.09 L213.20,230.47 L213.88,229.84 L214.54,229.20 L215.20,228.56 L215.84,227.91 L216.48,227.25 L217.11,226.58 L217.72,225.91 L218.33,225.22 L218.93,224.54 L219.52,223.84 L220.10,223.14 L220.67,222.43 L221.23,221.72 L221.78,220.99 L222.32,220.27 L222.85,219.54 L223.37,218.80 L223.88,218.05 L224.39,217.31 L224.88,216.55 L225.36,215.80 L225.83,215.03 L226.29,214.26 L226.75,213.49 L227.19,212.72 L227.63,211.94 L228.05,211.15 L228.47,210.37 L228.88,209.57 L229.27,208.78 L229.66,207.98 L230.04,207.18 L230.42,206.38 L230.78,205.57 L231.13,204.76 L231.48,203.94 L231.82,203.13 L232.15,202.31 L232.47,201.48 L232.79,200.66 L233.10,199.83 L233.40,199.00 L233.69,198.17 L233.97,197.33 L234.25,196.50 L234.52,195.65 L234.79,194.81 L235.04,193.97 L235.29,193.12 L235.54,192.27 L235.78,191.42 L236.01,190.56 L236.23,189.70 L236.45,188.84 L236.67,187.98 L236.87,187.12 L237.08,186.25 L237.27,185.38 L237.46,184.51 L237.65,183.63 L237.83,182.76 L238.01,181.88 L238.18,180.99 L238.34,180.11 L238.50,179.22 L238.66,178.33 L238.81,177.44 L238.96,176.54 L239.10,175.64 L239.24,174.74 L239.37,173.83 L239.50,172.93 L239.63,172.01 L239.75,171.10 L239.87,170.18 L239.98,169.26 L240.09,168.34 L240.20,167.42 L240.30,166.49 L240.40,165.55 L240.50,164.62 L240.59,163.68 L240.68,162.73 L240.77,161.79 L240.85,160.84 L240.93,159.89 L241.01,158.93 L241.08,157.97 L241.15,157.01 L241.22,156.04 L241.29,155.07 L241.35,154.09 L241.41,153.11 L241.47,152.13 L241.52,151.15 L241.58,150.16 L241.63,149.16 L241.68,148.16 L241.72,147.16 L241.77,146.16 L241.81,145.15 L241.85,144.13 L241.88,143.11 L241.92,142.09 L241.95,141.07 L241.98,140.03 L242.01,139.00 L242.04,137.96 L242.07,136.92 L242.09,135.87 L242.11,134.82 L242.13,133.76 L242.15,132.70 L242.17,131.63 L242.19,130.56 L242.20,129.49 L242.21,128.41 L242.23,127.33 L242.24,126.24 L242.25,125.15 L242.26,124.05 L242.26,122.95 L242.27,121.84 L242.27,120.73 L242.28,119.61 L242.28,118.49 L242.28,117.37 L242.28,116.24 L242.28,115.10 L242.28,97.00" fill="none" stroke="#1f8a86" stroke-width="2" stroke-linejoin="round"/>
<line x1="13" y1="96.4" x2="148.5" y2="96.4" stroke="#fff" stroke-width="1.4"/>
<!-- blue dims -->
<line x1="57.5" y1="97.5" x2="83" y2="97.5" stroke="#cfe2f8" stroke-width="4.6" stroke-linecap="round"/>
<line x1="57.5" y1="97.5" x2="83" y2="97.5" stroke="#2f7ee2" stroke-width="2.6"/>
<circle cx="57.6" cy="96.4" r="4" fill="#fff" stroke="#2f7ee2" stroke-width="2.3"/>
<line x1="216.6" y1="97.5" x2="241.5" y2="97.5" stroke="#cfe2f8" stroke-width="4.6" stroke-linecap="round"/>
<line x1="216.6" y1="97.5" x2="241.5" y2="97.5" stroke="#2f7ee2" stroke-width="2.6"/>
<circle cx="241.8" cy="96.4" r="4" fill="#fff" stroke="#2f7ee2" stroke-width="2.3"/>
<!-- blue dotted centre line -->
<line x1="288" y1="76" x2="285.3" y2="418" stroke="#00002a" stroke-width="4"/>
<line x1="288" y1="76" x2="285.3" y2="418" stroke="#1c1cdc" stroke-width="3.3" stroke-linecap="round" stroke-dasharray="0.5,5.43" stroke-dashoffset="-1.95"/>
<rect x="279.2" y="66.9" width="16.4" height="16.3" fill="none" stroke="#1111c8" stroke-width="2.4"/>
<path d="M281.5,68.5 L287.5,74.5 L293.5,68.5 M287.5,74.5 V84" stroke="#1414d0" stroke-width="1.8" fill="none"/><rect x="281.3" y="73.8" width="3" height="2.6" fill="#1414d0"/><rect x="290.6" y="73.8" width="3" height="2.6" fill="#1414d0"/>
<rect x="279" y="413" width="12.5" height="11.5" fill="#000018" stroke="#1616e8" stroke-width="2.7"/><rect x="282" y="416.5" width="1.4" height="4" fill="#c8c0c0"/><circle cx="286" cy="419" r="1.2" fill="#2020d0"/>
<g font-family="Liberation Sans" font-weight="bold" font-size="14.7" stroke-linejoin="round">
<g transform="translate(71.5,112.6) scale(1.055,1)">
<text x="0" y="0" fill="none" stroke="rgba(0,0,0,0.4)" stroke-width="4.6">30.0mm</text>
<text x="0" y="0" fill="#fff" stroke="#fff" stroke-width="3">30.0mm</text>
<text x="0" y="0" fill="#2274dc" stroke="#2274dc" stroke-width="1.25">30.0mm</text>
</g>
<g transform="translate(229.9,112.6) scale(1.055,1)">
<text x="0" y="0" fill="none" stroke="rgba(0,0,0,0.4)" stroke-width="4.6">30.0mm</text>
<text x="0" y="0" fill="#fff" stroke="#fff" stroke-width="3">30.0mm</text>
<text x="0" y="0" fill="#2274dc" stroke="#2274dc" stroke-width="1.25">30.0mm</text>
</g>
</g>
</g>
</svg>
<div id="sb" class="abs"></div>
<div id="thumb" class="abs"></div>
<div id="vline" class="abs"></div>

<div id="title" class="abs"></div>
<div class="t" style="left:409px;top:10px;font-size:11px;letter-spacing:0.3px">Tool options</div>
<div id="edgebox" class="abs"></div>
<div class="t" style="left:420px;top:32px;font-size:11px;letter-spacing:-0.37px">Edge part</div>

<div class="btn" style="top:61px"><div class="bt" style="left:27.6px;letter-spacing:-0.1px">Select position</div></div>
<div class="btn" style="top:109px"><div class="bt" style="left:28px;letter-spacing:-0.12px">Select edges</div></div>
<div class="btn sel" style="top:157px"><div class="bt" style="left:29.4px;letter-spacing:0.25px">Adjust offset</div></div>

<svg style="position:absolute;left:431px;top:72.9px" width="21" height="21" viewBox="-10.3 -10.3 21 21"><circle cx="0" cy="0" r="9.05" fill="none" stroke="#000" stroke-width="1.5"/><path transform="translate(0,0.5)" d="M-2.7,-2.4 L0.7,-4.7 L0.7,4.9" fill="none" stroke="#000" stroke-width="1.35" stroke-linecap="butt" stroke-linejoin="miter"/></svg>
<svg style="position:absolute;left:431px;top:120.9px" width="21" height="21" viewBox="-10.3 -10.3 21 21"><circle cx="0" cy="0" r="9.05" fill="none" stroke="#000" stroke-width="1.5"/><path transform="translate(0,0.5)" d="M-2.7,-2.9 C-2.3,-4.2 -1.2,-4.8 0.1,-4.8 C1.8,-4.8 2.8,-3.7 2.8,-2.3 C2.8,-0.9 1.9,0.1 0.7,1.1 L-2.8,4.2 L3.0,4.2" fill="none" stroke="#000" stroke-width="1.35" stroke-linecap="butt" stroke-linejoin="miter"/></svg>
<svg style="position:absolute;left:431px;top:168.9px" width="21" height="21" viewBox="-10.3 -10.3 21 21"><circle cx="0" cy="0" r="9.6" fill="#0b7c16" stroke="#7fd88a" stroke-width="0.7"/><path transform="translate(0,0.5)" d="M-2.5,-4.1 C-1.8,-4.6 -1,-4.8 0,-4.8 C1.6,-4.8 2.6,-3.9 2.6,-2.6 C2.6,-1.2 1.5,-0.3 -0.4,-0.3 C1.8,-0.3 2.9,0.7 2.9,2.2 C2.9,3.8 1.6,4.8 -0.1,4.8 C-1.1,4.8 -2,4.5 -2.8,4.0" fill="none" stroke="#d6f5d6" stroke-width="1.35" stroke-linecap="butt" stroke-linejoin="miter"/></svg>
<div class="t" style="left:429px;top:213px">Base length:</div>
<div class="t" style="left:562px;top:213px;letter-spacing:-0.3px">425.4 mm</div>

<div id="hdr1" style="letter-spacing:0.5px">Position</div>
<div id="hdr2" style="letter-spacing:0.25px">Distance</div>
<div id="row2" class="abs"></div>
<div class="t" style="left:426px;top:258px">0 %</div>
<div class="t" style="left:579px;top:258px;letter-spacing:0.5px;word-spacing:0.6px">30 mm</div>
<div class="t" style="left:426px;top:278px">100 %</div>
<div class="t" style="left:579px;top:278px;letter-spacing:0.5px;word-spacing:0.6px">30 mm</div>

<div id="cancel" class="abs">Cancel</div>
<div id="finish" class="abs">Finish</div>
</body></html>
